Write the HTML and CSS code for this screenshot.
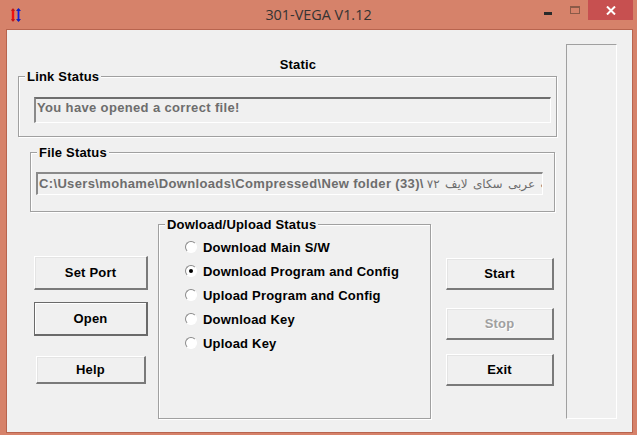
FILE: index.html
```html
<!DOCTYPE html>
<html lang="en">

<head>
    <meta charset="UTF-8" />
    <title>301-VEGA V1.12</title>
    <link rel="stylesheet" href="styles.css">
</head>

<body>

    <div class="window">
        <div class="title-bar">
            <svg class="app-icon" width="11" height="14" viewBox="0 0 11 14">
                <path d="M2 1v12" fill="none" stroke="#f01010" stroke-width="2.4" />
                <path d="M0 3l2-3 2 3zM0 11l2 3 2-3z" fill="#c01818" />
                <path d="M7.5 1v12" fill="none" stroke="#1020e0" stroke-width="1.8" />
                <path d="M5 3l2.5-3 2.5 3zM5 11l2.5 3 2.5-3z" fill="#1020c0" />
            </svg>
            <div class="title-text">301-VEGA V1.12</div>
            <div class="window-controls">
                <span class="min-btn"></span>
                <span class="max-btn"></span>
                <span class="close-btn">
                    <svg width="10" height="9" viewBox="0 0 10 9">
                        <path d="M1 .5l8 8M9 .5l-8 8" stroke="#fff" stroke-width="2" fill="none" />
                    </svg>
                </span>
            </div>
        </div>

        <div class="client">
            <div class="main">
                <div class="static-label">Static</div>

                <div class="group link-group">
                    <div class="group-label">Link Status</div>
                    <div class="field link-field">You have opened a correct file!</div>
                </div>

                <div class="group file-group">
                    <div class="group-label">File Status</div>
                    <div class="field file-field">C:\Users\mohame\Downloads\Compressed\New folder (33)\<span class="arabic">کتاب عربی سکای لایف ۷۲</span></div>
                </div>

                <div class="lower">
                    <div class="btn-col left-col">
                        <button class="btn set-port">Set Port</button>
                        <button class="btn open default">Open</button>
                        <button class="btn help">Help</button>
                    </div>

                    <div class="group mode-group">
                        <div class="group-label">Dowload/Upload Status</div>
                        <div class="radio-list">
                            <div class="radio-row"><span class="radio"></span>Download Main S/W</div>
                            <div class="radio-row"><span class="radio checked"></span>Download Program and Config</div>
                            <div class="radio-row"><span class="radio"></span>Upload Program and Config</div>
                            <div class="radio-row"><span class="radio"></span>Download Key</div>
                            <div class="radio-row"><span class="radio"></span>Upload Key</div>
                        </div>
                    </div>

                    <div class="btn-col right-col">
                        <button class="btn">Start</button>
                        <button class="btn stop" disabled>Stop</button>
                        <button class="btn exit">Exit</button>
                    </div>
                </div>
            </div>

            <div class="side-panel"></div>
        </div>
    </div>

</body>

</html>
```

FILE: styles.css
```css
html,
body {
    margin: 0;
    padding: 0;
}

.window {
    width: 637px;
    height: 435px;
    box-sizing: border-box;
    overflow: hidden;
    background: #d6826a;
    padding: 0 4px 0 6px;
    font-family: "Liberation Sans", Arial, sans-serif;
    font-size: 13px;
    font-weight: bold;
    letter-spacing: 0.2px;
    color: #000;
}

.title-bar {
    height: 29px;
    display: grid;
    grid-template-columns: 1fr auto 1fr;
}

.app-icon {
    margin: 8px 0 0 5px;
}

.title-text {
    font-family: "Open Sans", sans-serif;
    font-size: 14.4px;
    font-weight: normal;
    letter-spacing: 0;
    line-height: 29px;
    color: #333;
    margin-right: 2px;
}

.window-controls {
    display: flex;
    justify-content: flex-end;
    align-items: flex-start;
}

.min-btn {
    width: 8px;
    height: 3px;
    background: #2a2a2a;
    margin: 12px 18px 0 0;
}

.max-btn {
    width: 8px;
    height: 5px;
    border: 1px solid #8a5a48;
    border-top-width: 2px;
    margin: 6px 8px 0 0;
}

.close-btn {
    width: 45px;
    height: 20px;
    background: #c75050;
    display: flex;
    align-items: center;
    justify-content: center;
}

.client {
    height: 404px;
    box-sizing: border-box;
    display: flex;
    align-items: flex-start;
    background: #f0f0f0;
    border: 1px solid #b8644e;
    padding-top: 14px;
}

.main {
    width: 559px;
}

.static-label {
    margin-top: 13px;
    height: 14px;
    line-height: 16px;
    text-align: center;
    padding-left: 23px;
}

.group {
    box-sizing: border-box;
    border: 1px solid #a0a0a0;
    box-shadow: 1px 1px 0 #fff, inset 1px 1px 0 #fff;
}

.group-label {
    display: table;
    height: 14px;
    line-height: 16px;
    margin: -8px 0 0 6px;
    padding: 0 2px;
    background: #f0f0f0;
}

.link-group {
    width: 539px;
    height: 61px;
    margin: 5px 0 0 11px;
}

.file-group {
    width: 525px;
    height: 60px;
    margin: 15px 0 0 23px;
}

.field {
    box-sizing: border-box;
    border: 1px solid #fff;
    border-top: 2px solid #6e6e6e;
    border-left: 2px solid #8a8a8a;
    color: #6d6d6d;
    letter-spacing: 0.35px;
    white-space: nowrap;
    overflow: hidden;
}

.link-field {
    width: 517px;
    height: 26px;
    margin: 12px 0 0 15px;
    padding: 0 1px;
    line-height: 18px;
}

.file-field {
    width: 507px;
    height: 23px;
    margin: 11px 0 0 5px;
    padding-left: 1px;
    line-height: 19px;
    border-top-color: #8a8a8a;
}

.arabic {
    font-family: "DejaVu Sans", sans-serif;
    font-size: 12px;
    font-weight: normal;
    letter-spacing: 0;
    word-spacing: 1.5px;
    margin-left: 3px;
}

.lower {
    display: flex;
    align-items: flex-start;
    margin-top: 12px;
    margin-left: 27px;
}

.btn-col {
    display: flex;
    flex-direction: column;
    align-items: flex-start;
}

.left-col {
    width: 114px;
    padding-top: 32px;
}

.right-col {
    width: 108px;
    margin-left: 15px;
    padding-top: 34px;
}

.btn {
    width: 100%;
    height: 32px;
    box-sizing: border-box;
    padding: 0;
    background: #f0f0f0;
    font: inherit;
    letter-spacing: inherit;
    color: #000;
    border: 1px solid #fff;
    border-right: 2px solid #7a7a7a;
    border-bottom: 2px solid #7a7a7a;
    box-shadow: inset 1px 1px 0 #e4e4e4;
}

.set-port {
    height: 34px;
}

.open {
    height: 34px;
    margin-top: 12px;
}

.default {
    border: 1px solid #6a6a6a;
    border-right-width: 2px;
    border-bottom-width: 2px;
    box-shadow: inset 1px 1px 0 #fff;
}

.help {
    width: 110px;
    height: 28px;
    margin: 20px 0 0 2px;
}

.stop {
    margin-top: 18px;
    color: #a0a0a0;
    text-shadow: 1px 1px 0 #fff;
}

.exit {
    margin-top: 14px;
}

.mode-group {
    width: 273px;
    height: 195px;
    margin-left: 10px;
}

.radio-list {
    margin-top: 2px;
    padding-left: 26px;
}

.radio-row {
    display: flex;
    align-items: center;
    gap: 6px;
    height: 24px;
}

.radio {
    width: 12px;
    height: 12px;
    box-sizing: border-box;
    border-radius: 50%;
    border: 1px solid;
    border-color: #8a8a8a #fff #fff #8a8a8a;
    background: #fff;
    display: flex;
    align-items: center;
    justify-content: center;
}

.radio.checked::after {
    content: "";
    width: 4px;
    height: 4px;
    border-radius: 50%;
    background: #000;
}

.side-panel {
    width: 51px;
    height: 375px;
    box-sizing: border-box;
    border: 1px solid;
    border-color: #a0a0a0 #fff #fff #a0a0a0;
}
```
